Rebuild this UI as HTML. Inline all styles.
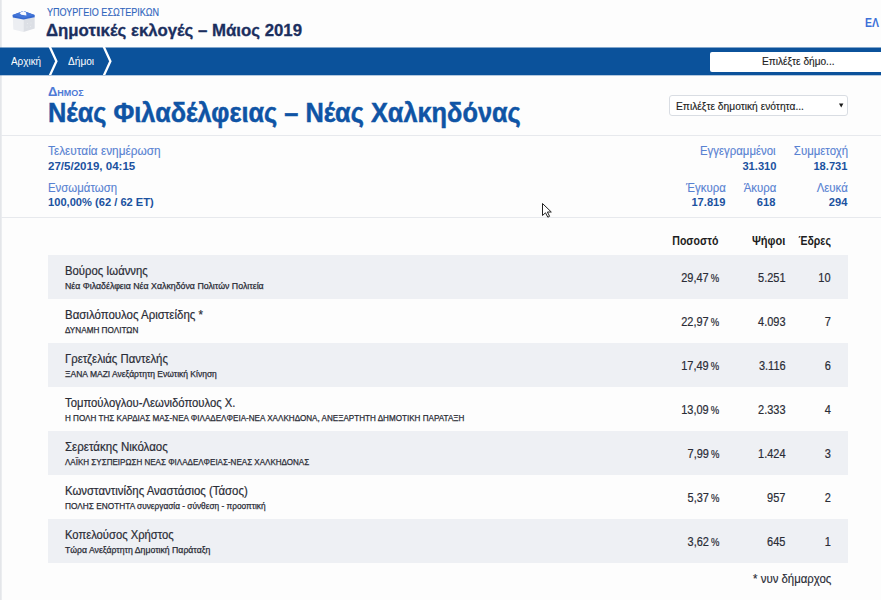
<!DOCTYPE html>
<html><head><meta charset="utf-8">
<style>
html,body{margin:0;padding:0;width:881px;height:600px;overflow:hidden;background:#fdfdfd;}
body{position:relative;font-family:"Liberation Sans",sans-serif;}
.t{position:absolute;line-height:1;white-space:nowrap;transform-origin:0 0;}
.r{transform-origin:100% 0;}
#lstrip{position:absolute;left:0;top:0;width:2px;height:600px;background:linear-gradient(to right,#e1e3e7,#eef0f2);}
#bar{position:absolute;left:0;top:47px;width:881px;height:28px;background:#0b529b;}
.hr{position:absolute;left:1px;width:880px;height:1px;background:#e7e9ed;}
.row{position:absolute;left:48px;width:800px;height:44px;}
.stripe{background:#eef0f4;}
.nm{left:65px;font-size:12px;color:#2a2c36;transform:scaleX(0.94);-webkit-text-stroke:0.2px #2a2c36;}
.pt{left:65px;font-size:8.7px;color:#2a2c36;-webkit-text-stroke:0.25px #2a2c36;}
.num{font-size:12.2px;color:#2a2c36;text-align:right;transform:scaleX(0.9);transform-origin:100% 0;-webkit-text-stroke:0.2px #2a2c36;}
.pc{right:162px;}
.pcs{font-size:10.5px;margin-left:-0.5px;}
.vt{right:95.5px;}
.st{right:50px;}
.lbl{font-size:12px;color:#5882d2;transform:scaleX(0.95);-webkit-text-stroke:0.12px #5882d2;}
.val{font-size:11.6px;font-weight:bold;color:#1b52a0;transform:scaleX(0.96);}
.th{font-size:12px;font-weight:bold;color:#1d1d22;top:235.2px;transform:scaleX(0.88);}
</style></head><body>
<div id="lstrip"></div>
<svg style="position:absolute;left:0;top:0" width="50" height="45" viewBox="0 0 50 45">
  <polygon points="12.8,17.2 23.5,19.2 23.5,32.1 13.3,29.5" fill="#eceef2"/>
  <polygon points="23.5,19.2 34.7,16.9 34.7,28.4 23.5,32.1" fill="#dcdfe5"/>
  <circle cx="27.5" cy="23.5" r="0.5" fill="#eceef1"/><circle cx="31" cy="23" r="0.5" fill="#eceef1"/>
  <circle cx="27" cy="27" r="0.5" fill="#eceef1"/><circle cx="30.5" cy="26.5" r="0.5" fill="#eceef1"/>
  <polygon points="12.5,15.1 23.5,11.1 34.7,15.1 34.7,17.2 23.5,19.6 12.8,17.6" fill="#3568cf"/>
  <polygon points="12.5,15.1 23.5,11.1 34.7,15.1 23.5,18.2" fill="#4476d8"/>
  <polygon points="19.5,12.9 23.5,11.1 26.1,12.4 26.4,15.6 21.3,14.8" fill="#fafbff"/>
</svg>
<div class="t" style="left:46.6px;top:7.6px;font-size:10px;color:#3266bd;-webkit-text-stroke:0.15px #3266bd;transform:scaleX(0.903)">ΥΠΟΥΡΓΕΙΟ ΕΣΩΤΕΡΙΚΩΝ</div>
<div class="t" style="left:46px;top:23px;font-size:16px;font-weight:bold;color:#1b2f5f;transform:scaleX(1.05);-webkit-text-stroke:0.3px #1b2f5f">Δημοτικές εκλογές – Μάιος 2019</div>
<div class="t" style="left:865.3px;top:16.8px;font-size:12.2px;font-weight:bold;color:#3d70d8;transform:scaleX(0.86)">ΕΛ</div>
<svg style="position:absolute;left:0;top:0" width="881" height="80"><rect x="0" y="47.5" width="881" height="27.8" fill="#0b529b"/></svg>
<svg style="position:absolute;left:0;top:47px" width="130" height="28" viewBox="0 0 130 28">
  <polyline points="49.4,-1 56.4,14.2 49.4,29.5" fill="none" stroke="#fff" stroke-width="2.3"/>
  <polyline points="103.4,-1 110.4,14.2 103.4,29.5" fill="none" stroke="#fff" stroke-width="2.3"/>
</svg>
<div class="t" style="left:11px;top:55.9px;font-size:11px;color:#fff;transform:scaleX(0.9)">Αρχική</div>
<div class="t" style="left:68px;top:55.9px;font-size:11px;color:#fff;transform:scaleX(0.92)">Δήμοι</div>
<div style="position:absolute;left:710px;top:52px;width:180px;height:20px;background:#fff;border-radius:2px;"></div>
<div class="t" style="left:761.5px;top:56px;font-size:11px;color:#222;transform:scaleX(0.92);-webkit-text-stroke:0.15px #222">Επιλέξτε δήμο...</div>

<div class="t" style="left:48px;top:84.6px;font-size:13px;font-weight:bold;color:#4f7ad6;font-variant:small-caps">Δημος</div>
<div class="t" style="left:48px;top:99.2px;font-size:27.4px;font-weight:bold;color:#0f54a5;transform:scaleX(0.925);-webkit-text-stroke:0.5px #0f54a5">Νέας Φιλαδέλφειας – Νέας Χαλκηδόνας</div>
<div style="position:absolute;left:669px;top:95px;width:177px;height:19px;border:1px solid #d9dde3;border-radius:3px;background:#fff;"></div>
<div class="t" style="left:676px;top:100.5px;font-size:11px;color:#222;transform:scaleX(0.93);-webkit-text-stroke:0.15px #222">Επιλέξτε δημοτική ενότητα...</div>
<svg style="position:absolute;left:836px;top:101.3px" width="10" height="8" viewBox="0 0 10 8"><polygon points="3,2.4 7.4,2.4 5.2,6.4" fill="#1a1a1a"/></svg>
<div class="hr" style="top:135px"></div>

<div class="t lbl" style="left:48px;top:145.2px;transform:scaleX(0.985)">Τελευταία ενημέρωση</div>
<div class="t val" style="left:48px;top:160.1px;transform:scaleX(0.995)">27/5/2019, 04:15</div>
<div class="t lbl" style="left:48px;top:182.3px">Ενσωμάτωση</div>
<div class="t val" style="left:48px;top:196.4px">100,00% (62 / 62 ET)</div>

<div class="t lbl r" style="right:105px;top:145.2px">Εγγεγραμμένοι</div>
<div class="t val r" style="right:105px;top:160.1px">31.310</div>
<div class="t lbl r" style="right:33px;top:145.2px">Συμμετοχή</div>
<div class="t val r" style="right:34px;top:160.1px">18.731</div>
<div class="t lbl r" style="right:155px;top:182.3px">Έγκυρα</div>
<div class="t val r" style="right:155.5px;top:196.4px">17.819</div>
<div class="t lbl r" style="right:105px;top:182.3px">Άκυρα</div>
<div class="t val r" style="right:105.5px;top:196.4px">618</div>
<div class="t lbl r" style="right:33px;top:182.3px">Λευκά</div>
<div class="t val r" style="right:34px;top:196.4px">294</div>
<div class="hr" style="top:217px"></div>

<div class="t th r" style="right:162.5px">Ποσοστό</div>
<div class="t th r" style="right:95.5px;transform:scaleX(0.92)">Ψήφοι</div>
<div class="t th r" style="right:50px">Έδρες</div>
<div class="row stripe" style="top:255px"></div><div class="t nm" style="top:264.5px;transform:scaleX(0.94)">Βούρος Ιωάννης</div><div class="t pt" style="top:282px;transform:scaleX(1.012)">Νέα Φιλαδέλφεια Νέα Χαλκηδόνα Πολιτών Πολιτεία</div><div class="t num pc" style="top:271.8px">29,47<span class="pcs">&nbsp;%</span></div><div class="t num vt" style="top:271.8px">5.251</div><div class="t num st" style="top:271.8px">10</div>
<div class="row" style="top:299px"></div><div class="t nm" style="top:308.5px;transform:scaleX(0.955)">Βασιλόπουλος Αριστείδης *</div><div class="t pt" style="top:326px;transform:scaleX(0.94)">ΔΥΝΑΜΗ ΠΟΛΙΤΩΝ</div><div class="t num pc" style="top:315.8px">22,97<span class="pcs">&nbsp;%</span></div><div class="t num vt" style="top:315.8px">4.093</div><div class="t num st" style="top:315.8px">7</div>
<div class="row stripe" style="top:343px"></div><div class="t nm" style="top:352.5px;transform:scaleX(0.945)">Γρετζελιάς Παντελής</div><div class="t pt" style="top:370px;transform:scaleX(0.978)">ΞΑΝΑ ΜΑΖΙ Ανεξάρτητη Ενωτική Κίνηση</div><div class="t num pc" style="top:359.8px">17,49<span class="pcs">&nbsp;%</span></div><div class="t num vt" style="top:359.8px">3.116</div><div class="t num st" style="top:359.8px">6</div>
<div class="row" style="top:387px"></div><div class="t nm" style="top:396.5px;transform:scaleX(0.94)">Τομπούλογλου-Λεωνιδόπουλος Χ.</div><div class="t pt" style="top:414px;transform:scaleX(0.9325)">Η ΠΟΛΗ ΤΗΣ ΚΑΡΔΙΑΣ ΜΑΣ-ΝΕΑ ΦΙΛΑΔΕΛΦΕΙΑ-ΝΕΑ ΧΑΛΚΗΔΟΝΑ, ΑΝΕΞΑΡΤΗΤΗ ΔΗΜΟΤΙΚΗ ΠΑΡΑΤΑΞΗ</div><div class="t num pc" style="top:403.8px">13,09<span class="pcs">&nbsp;%</span></div><div class="t num vt" style="top:403.8px">2.333</div><div class="t num st" style="top:403.8px">4</div>
<div class="row stripe" style="top:431px"></div><div class="t nm" style="top:440.5px;transform:scaleX(0.96)">Σερετάκης Νικόλαος</div><div class="t pt" style="top:458px;transform:scaleX(0.925)">ΛΑΪΚΗ ΣΥΣΠΕΙΡΩΣΗ ΝΕΑΣ ΦΙΛΑΔΕΛΦΕΙΑΣ-ΝΕΑΣ ΧΑΛΚΗΔΟΝΑΣ</div><div class="t num pc" style="top:447.8px">7,99<span class="pcs">&nbsp;%</span></div><div class="t num vt" style="top:447.8px">1.424</div><div class="t num st" style="top:447.8px">3</div>
<div class="row" style="top:475px"></div><div class="t nm" style="top:484.5px;transform:scaleX(0.95)">Κωνσταντινίδης Αναστάσιος (Τάσος)</div><div class="t pt" style="top:502px;transform:scaleX(0.954)">ΠΟΛΗΣ ΕΝΟΤΗΤΑ συνεργασία - σύνθεση - προοπτική</div><div class="t num pc" style="top:491.8px">5,37<span class="pcs">&nbsp;%</span></div><div class="t num vt" style="top:491.8px">957</div><div class="t num st" style="top:491.8px">2</div>
<div class="row stripe" style="top:519px"></div><div class="t nm" style="top:528.5px;transform:scaleX(0.935)">Κοπελούσος Χρήστος</div><div class="t pt" style="top:546px;transform:scaleX(1.0)">Τώρα Ανεξάρτητη Δημοτική Παράταξη</div><div class="t num pc" style="top:535.8px">3,62<span class="pcs">&nbsp;%</span></div><div class="t num vt" style="top:535.8px">645</div><div class="t num st" style="top:535.8px">1</div>
<div class="t r" style="right:50px;top:572.7px;font-size:12px;color:#2a2c36;transform:scaleX(0.95);-webkit-text-stroke:0.15px #2a2c36">* νυν δήμαρχος</div>

<svg style="position:absolute;left:541px;top:202px" width="14" height="18" viewBox="0 0 14 18">
  <path d="M1.5,1.5 L1.5,13.5 L4.5,10.8 L6.8,15.2 L8.6,14.3 L6.4,10 L10.3,10 Z" fill="#fff" stroke="#222" stroke-width="1" stroke-linejoin="round"/>
</svg>
</body></html>
